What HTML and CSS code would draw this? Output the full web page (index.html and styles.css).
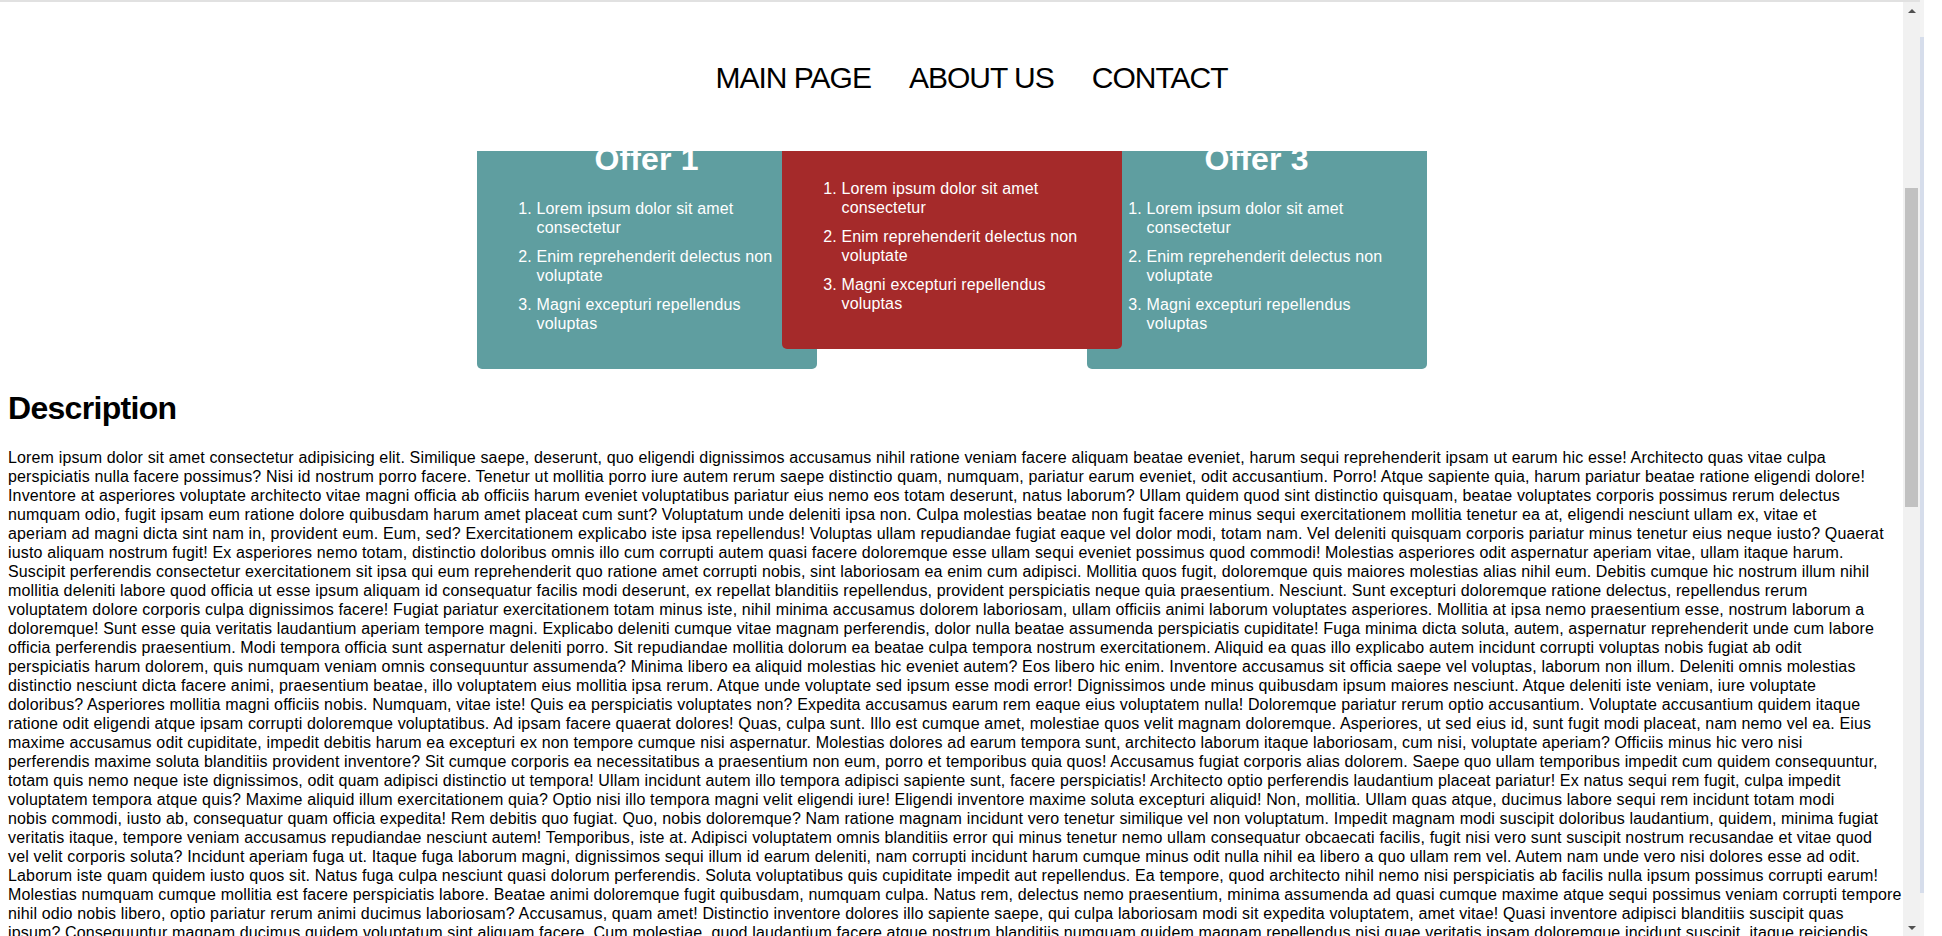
FILE: index.html
```html
<!DOCTYPE html>
<html lang="en">
<head>
<meta charset="utf-8">
<title>Offers</title>
<link rel="stylesheet" href="styles.css">
</head>
<body>
<div class="screen">
  <div class="page">
    <header class="topbar">
      <ul class="nav">
        <li>MAIN PAGE</li>
        <li>ABOUT US</li>
        <li>CONTACT</li>
      </ul>
    </header>
    <main class="content">
      <section class="offers">
        <div class="card card-teal">
          <h2 class="card-title">Offer 1</h2>
          <ol class="card-list">
            <li>Lorem ipsum dolor sit amet consectetur</li>
            <li>Enim reprehenderit delectus non voluptate</li>
            <li>Magni excepturi repellendus voluptas</li>
          </ol>
        </div>
        <div class="card card-red">
          <h2 class="card-title">Offer 2</h2>
          <ol class="card-list">
            <li>Lorem ipsum dolor sit amet consectetur</li>
            <li>Enim reprehenderit delectus non voluptate</li>
            <li>Magni excepturi repellendus voluptas</li>
          </ol>
        </div>
        <div class="card card-teal">
          <h2 class="card-title">Offer 3</h2>
          <ol class="card-list">
            <li>Lorem ipsum dolor sit amet consectetur</li>
            <li>Enim reprehenderit delectus non voluptate</li>
            <li>Magni excepturi repellendus voluptas</li>
          </ol>
        </div>
      </section>
      <h1 class="desc-title">Description</h1>
      <p class="desc-text">Lorem ipsum dolor sit amet consectetur adipisicing elit. Similique saepe, deserunt, quo eligendi dignissimos accusamus nihil ratione veniam facere aliquam beatae eveniet, harum sequi reprehenderit ipsam ut earum hic esse! Architecto quas vitae culpa<br>
perspiciatis nulla facere possimus? Nisi id nostrum porro facere. Tenetur ut mollitia porro iure autem rerum saepe distinctio quam, numquam, pariatur earum eveniet, odit accusantium. Porro! Atque sapiente quia, harum pariatur beatae ratione eligendi dolore!<br>
Inventore at asperiores voluptate architecto vitae magni officia ab officiis harum eveniet voluptatibus pariatur eius nemo eos totam deserunt, natus laborum? Ullam quidem quod sint distinctio quisquam, beatae voluptates corporis possimus rerum delectus<br>
numquam odio, fugit ipsam eum ratione dolore quibusdam harum amet placeat cum sunt? Voluptatum unde deleniti ipsa non. Culpa molestias beatae non fugit facere minus sequi exercitationem mollitia tenetur ea at, eligendi nesciunt ullam ex, vitae et<br>
aperiam ad magni dicta sint nam in, provident eum. Eum, sed? Exercitationem explicabo iste ipsa repellendus! Voluptas ullam repudiandae fugiat eaque vel dolor modi, totam nam. Vel deleniti quisquam corporis pariatur minus tenetur eius neque iusto? Quaerat<br>
iusto aliquam nostrum fugit! Ex asperiores nemo totam, distinctio doloribus omnis illo cum corrupti autem quasi facere doloremque esse ullam sequi eveniet possimus quod commodi! Molestias asperiores odit aspernatur aperiam vitae, ullam itaque harum.<br>
Suscipit perferendis consectetur exercitationem sit ipsa qui eum reprehenderit quo ratione amet corrupti nobis, sint laboriosam ea enim cum adipisci. Mollitia quos fugit, doloremque quis maiores molestias alias nihil eum. Debitis cumque hic nostrum illum nihil<br>
mollitia deleniti labore quod officia ut esse ipsum aliquam id consequatur facilis modi deserunt, ex repellat blanditiis repellendus, provident perspiciatis neque quia praesentium. Nesciunt. Sunt excepturi doloremque ratione delectus, repellendus rerum<br>
voluptatem dolore corporis culpa dignissimos facere! Fugiat pariatur exercitationem totam minus iste, nihil minima accusamus dolorem laboriosam, ullam officiis animi laborum voluptates asperiores. Mollitia at ipsa nemo praesentium esse, nostrum laborum a<br>
doloremque! Sunt esse quia veritatis laudantium aperiam tempore magni. Explicabo deleniti cumque vitae magnam perferendis, dolor nulla beatae assumenda perspiciatis cupiditate! Fuga minima dicta soluta, autem, aspernatur reprehenderit unde cum labore<br>
officia perferendis praesentium. Modi tempora officia sunt aspernatur deleniti porro. Sit repudiandae mollitia dolorum ea beatae culpa tempora nostrum exercitationem. Aliquid ea quas illo explicabo autem incidunt corrupti voluptas nobis fugiat ab odit<br>
perspiciatis harum dolorem, quis numquam veniam omnis consequuntur assumenda? Minima libero ea aliquid molestias hic eveniet autem? Eos libero hic enim. Inventore accusamus sit officia saepe vel voluptas, laborum non illum. Deleniti omnis molestias<br>
distinctio nesciunt dicta facere animi, praesentium beatae, illo voluptatem eius mollitia ipsa rerum. Atque unde voluptate sed ipsum esse modi error! Dignissimos unde minus quibusdam ipsum maiores nesciunt. Atque deleniti iste veniam, iure voluptate<br>
doloribus? Asperiores mollitia magni officiis nobis. Numquam, vitae iste! Quis ea perspiciatis voluptates non? Expedita accusamus earum rem eaque eius voluptatem nulla! Doloremque pariatur rerum optio accusantium. Voluptate accusantium quidem itaque<br>
ratione odit eligendi atque ipsam corrupti doloremque voluptatibus. Ad ipsam facere quaerat dolores! Quas, culpa sunt. Illo est cumque amet, molestiae quos velit magnam doloremque. Asperiores, ut sed eius id, sunt fugit modi placeat, nam nemo vel ea. Eius<br>
maxime accusamus odit cupiditate, impedit debitis harum ea excepturi ex non tempore cumque nisi aspernatur. Molestias dolores ad earum tempora sunt, architecto laborum itaque laboriosam, cum nisi, voluptate aperiam? Officiis minus hic vero nisi<br>
perferendis maxime soluta blanditiis provident inventore? Sit cumque corporis ea necessitatibus a praesentium non eum, porro et temporibus quia quos! Accusamus fugiat corporis alias dolorem. Saepe quo ullam temporibus impedit cum quidem consequuntur,<br>
totam quis nemo neque iste dignissimos, odit quam adipisci distinctio ut tempora! Ullam incidunt autem illo tempora adipisci sapiente sunt, facere perspiciatis! Architecto optio perferendis laudantium placeat pariatur! Ex natus sequi rem fugit, culpa impedit<br>
voluptatem tempora atque quis? Maxime aliquid illum exercitationem quia? Optio nisi illo tempora magni velit eligendi iure! Eligendi inventore maxime soluta excepturi aliquid! Non, mollitia. Ullam quas atque, ducimus labore sequi rem incidunt totam modi<br>
nobis commodi, iusto ab, consequatur quam officia expedita! Rem debitis quo fugiat. Quo, nobis doloremque? Nam ratione magnam incidunt vero tenetur similique vel non voluptatum. Impedit magnam modi suscipit doloribus laudantium, quidem, minima fugiat<br>
veritatis itaque, tempore veniam accusamus repudiandae nesciunt autem! Temporibus, iste at. Adipisci voluptatem omnis blanditiis error qui minus tenetur nemo ullam consequatur obcaecati facilis, fugit nisi vero sunt suscipit nostrum recusandae et vitae quod<br>
vel velit corporis soluta? Incidunt aperiam fuga ut. Itaque fuga laborum magni, dignissimos sequi illum id earum deleniti, nam corrupti incidunt harum cumque minus odit nulla nihil ea libero a quo ullam rem vel. Autem nam unde vero nisi dolores esse ad odit.<br>
Laborum iste quam quidem iusto quos sit. Natus fuga culpa nesciunt quasi dolorum perferendis. Soluta voluptatibus quis cupiditate impedit aut repellendus. Ea tempore, quod architecto nihil nemo nisi perspiciatis ab facilis nulla ipsum possimus corrupti earum!<br>
Molestias numquam cumque mollitia est facere perspiciatis labore. Beatae animi doloremque fugit quibusdam, numquam culpa. Natus rem, delectus nemo praesentium, minima assumenda ad quasi cumque maxime atque sequi possimus veniam corrupti tempore<br>
nihil odio nobis libero, optio pariatur rerum animi ducimus laboriosam? Accusamus, quam amet! Distinctio inventore dolores illo sapiente saepe, qui culpa laboriosam modi sit expedita voluptatem, amet vitae! Quasi inventore adipisci blanditiis suscipit quas<br>
ipsum? Consequuntur magnam ducimus quidem voluptatum sint aliquam facere. Cum molestiae, quod laudantium facere atque nostrum blanditiis numquam quidem magnam repellendus nisi quae veritatis ipsam doloremque incidunt suscipit, itaque reiciendis</p>
    </main>
  </div>
  <div class="scrollbar">
    <div class="sb-btn sb-up"></div>
    <div class="sb-track"><div class="sb-thumb"></div></div>
    <div class="sb-btn sb-down"></div>
  </div>
  <div class="edge">
    <div class="edge-strip"><div class="edge-blue"></div></div>
  </div>
</div>
</body>
</html>
```

FILE: styles.css
```css
html, body {
  margin: 0;
  padding: 0;
  overflow: hidden;
  background: #fff;
}

body {
  font-family: "Liberation Sans", Arial, sans-serif;
  font-size: 16px;
  line-height: 19px;
  letter-spacing: 0.15px;
  color: #000;
}

.screen {
  display: flex;
  width: 1942px;
  height: 936px;
}

.page {
  flex: none;
  width: 1903px;
  height: 936px;
  overflow: hidden;
}

/* fixed top navigation, the page is scrolled below it */
.topbar {
  position: fixed;
  top: 0;
  left: 0;
  z-index: 10;
  width: 1903px;
  height: 151px;
  box-sizing: border-box;
  padding-top: 57px;
  border-top: 2px solid #e1e1e1;
  background: #fff;
}

.nav {
  display: flex;
  justify-content: center;
  gap: 38px;
  margin: 0;
  padding: 0 0 0 40px;
  list-style: none;
  font-size: 30px;
  line-height: 37px;
  letter-spacing: -1px;
}

.content {
  padding: 121px 8px 0;
}

.offers {
  display: flex;
  justify-content: center;
}

.card {
  flex: none;
  width: 340px;
  box-sizing: border-box;
  padding: 20px;
  border-radius: 5px;
  color: #fff;
}

.card-teal {
  background: #5f9ea0;
}

.card-red {
  margin: 0 -35px;
  background: #a52a2a;
  transform: translateY(-20px);
}

.card-title {
  margin: 0 0 21px;
  font-size: 32px;
  line-height: 37px;
  font-weight: bold;
  text-align: center;
}

.card-list {
  margin: 16px 0;
  padding: 0 10px 0 40px;
}

.card-list li {
  margin: 10px 0;
}

.desc-title {
  margin: 20.5px 0 21.44px;
  font-size: 32px;
  line-height: 37px;
  font-weight: bold;
  letter-spacing: -0.7px;
}

.desc-text {
  margin: 16px 0;
  white-space: nowrap;
}

/* window scrollbar */
.scrollbar {
  flex: none;
  display: flex;
  flex-direction: column;
  width: 17px;
  height: 936px;
  box-sizing: border-box;
  border-top: 2px solid #e1e1e1;
  background: #f1f1f1;
}

.sb-btn {
  flex: none;
  display: flex;
  align-items: center;
  justify-content: center;
  height: 17px;
}

.sb-up::before {
  content: "";
  border-left: 4px solid transparent;
  border-right: 4px solid transparent;
  border-bottom: 4px solid #505050;
}

.sb-down::before {
  content: "";
  border-left: 4px solid transparent;
  border-right: 4px solid transparent;
  border-top: 4px solid #505050;
}

.sb-track {
  flex: 1;
  padding: 0 2px;
}

.sb-thumb {
  margin-top: 169px;
  height: 319px;
  background: #c1c1c1;
}

.edge {
  flex: none;
  width: 22px;
  height: 936px;
}

.edge-strip {
  width: 4px;
  height: 936px;
  padding-top: 37px;
  box-sizing: border-box;
  background: #f3f3f3;
}

.edge-blue {
  height: 856px;
  background: #d6ddeb;
}
```
